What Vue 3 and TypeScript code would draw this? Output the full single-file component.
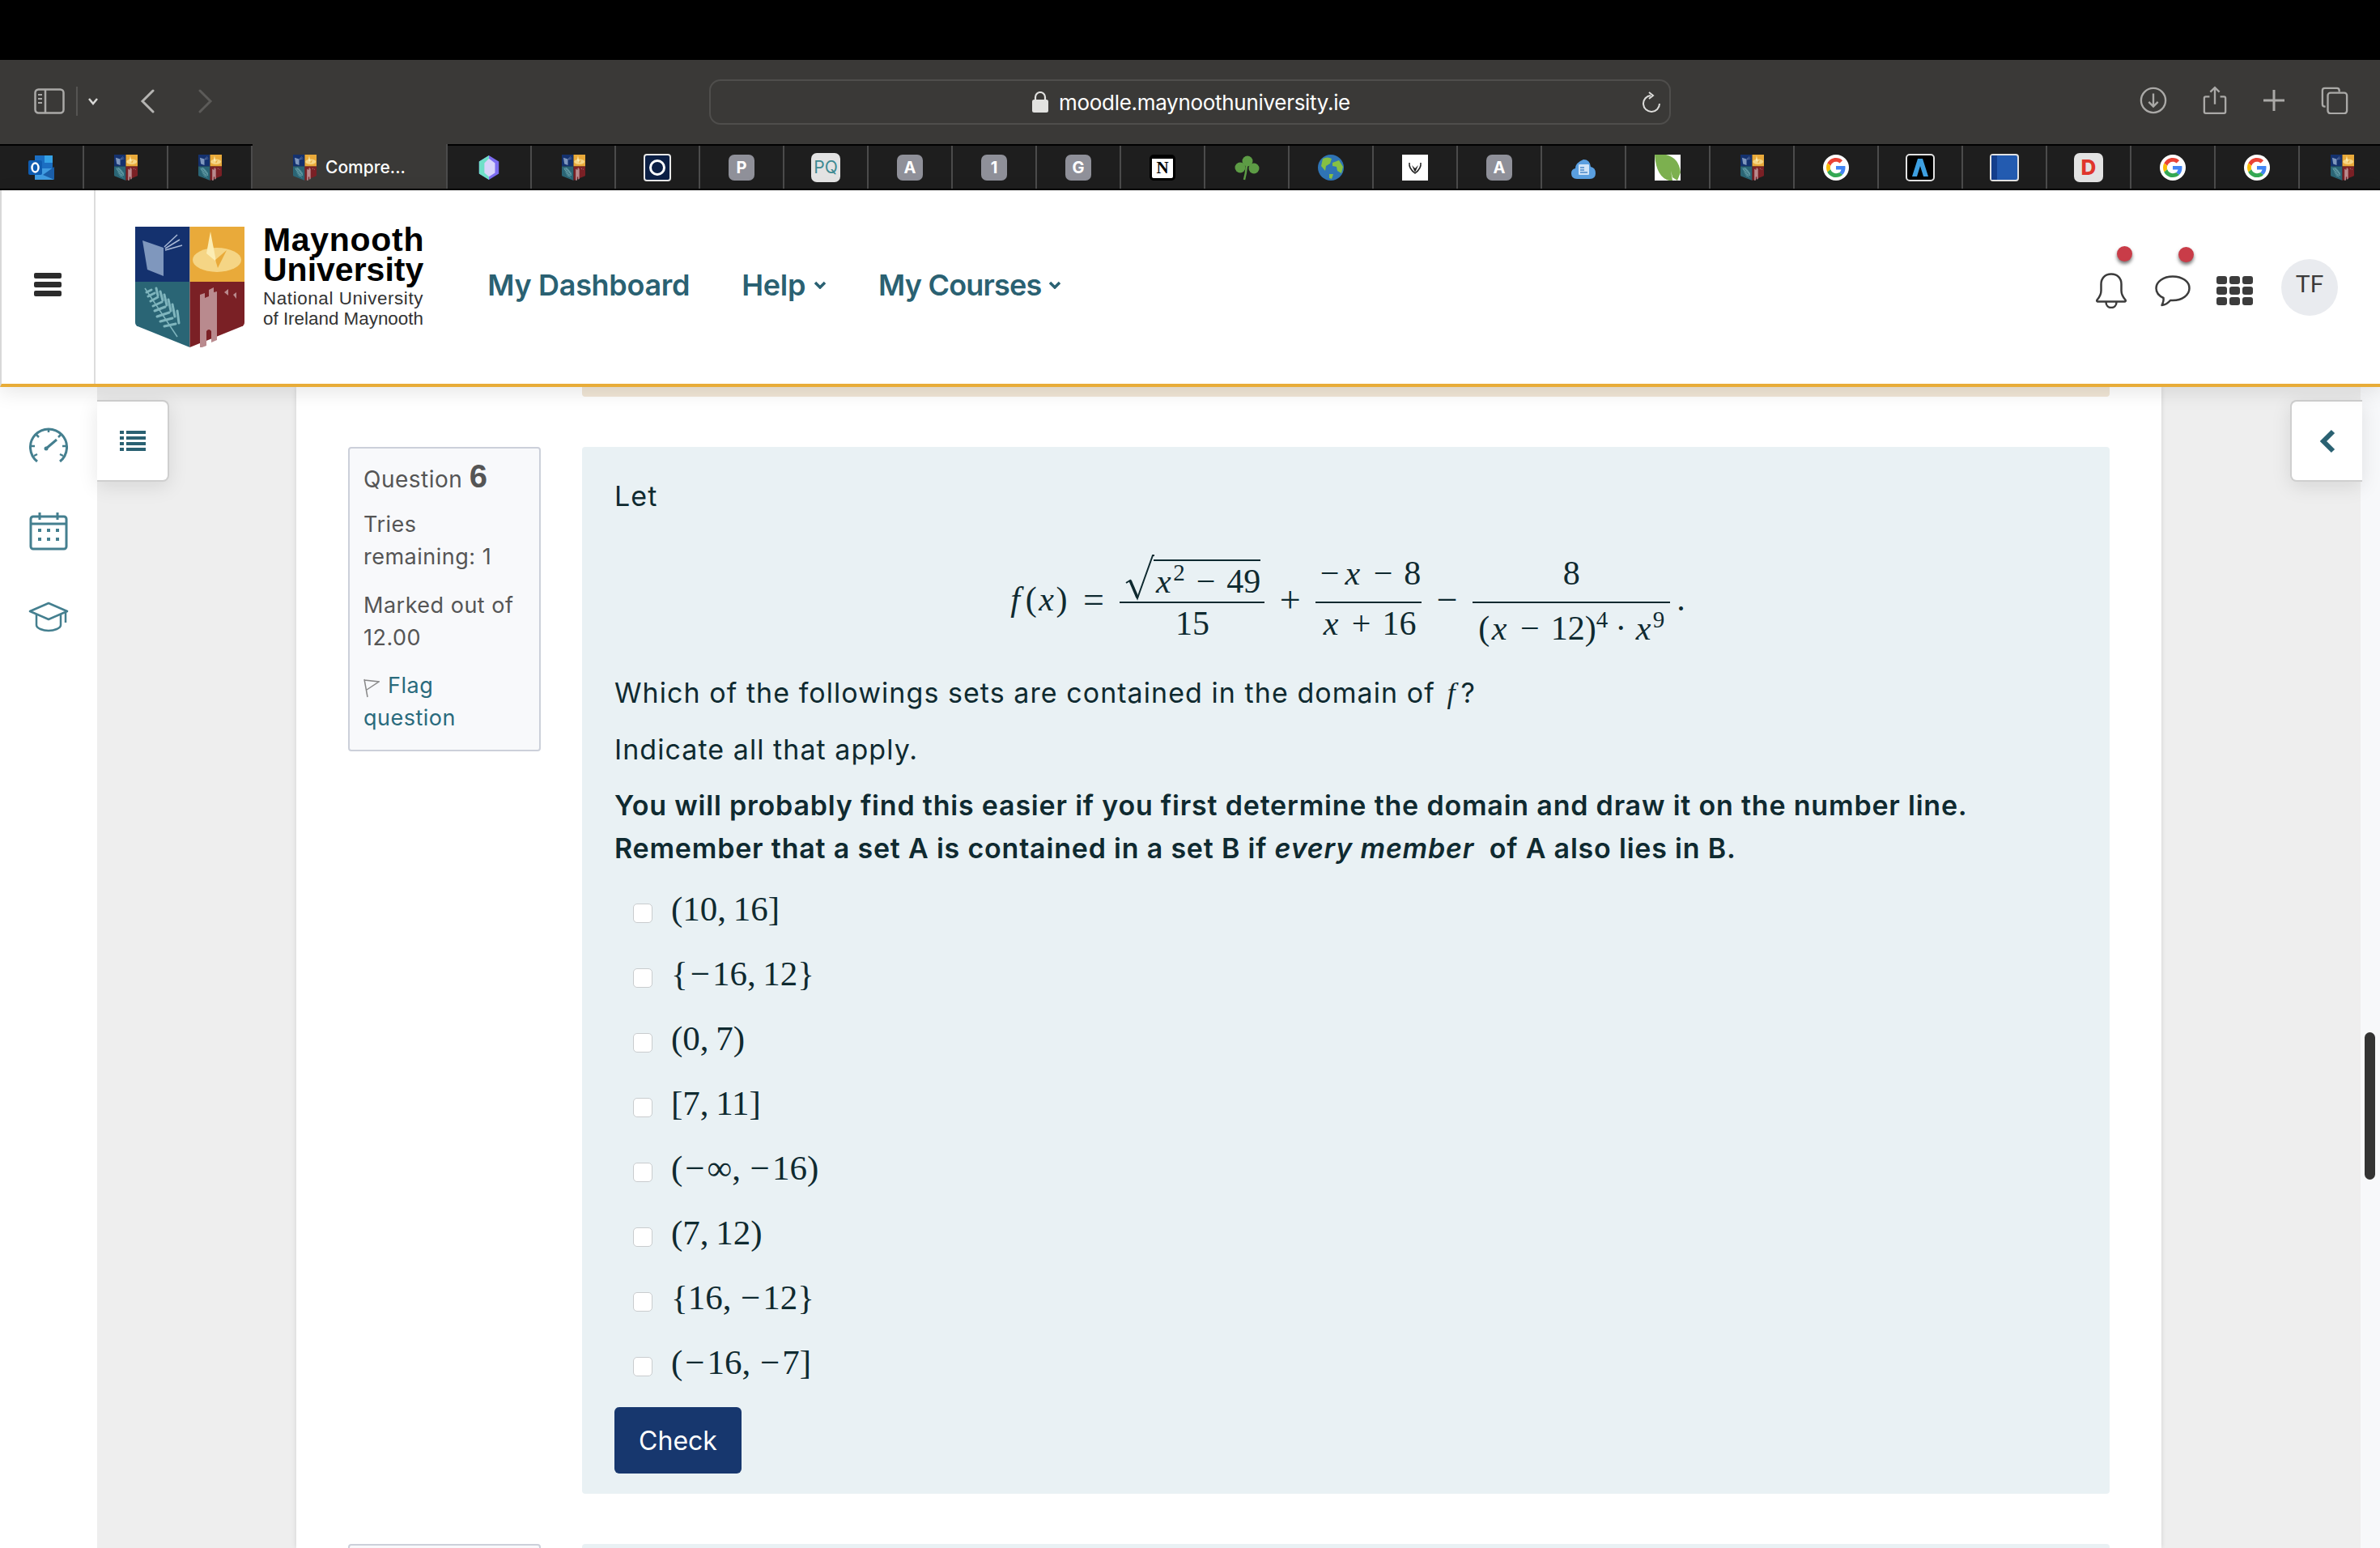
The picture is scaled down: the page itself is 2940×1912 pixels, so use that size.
<script setup lang="ts">
type Favicon = { kind: string; label?: string; name?: string };

const tabs: Favicon[] = [
  { kind: 'outlook' },
  { kind: 'shield' },
  { kind: 'shield' },
  { kind: 'shield', name: 'Compre...' },
  { kind: 'crystal' },
  { kind: 'shield' },
  { kind: 'ring' },
  { kind: 'letter', label: 'P' },
  { kind: 'pq', label: 'PQ' },
  { kind: 'letter', label: 'A' },
  { kind: 'letter', label: '1' },
  { kind: 'letter', label: 'G' },
  { kind: 'notion', label: 'N' },
  { kind: 'clover' },
  { kind: 'globe' },
  { kind: 'vee' },
  { kind: 'letter', label: 'A' },
  { kind: 'cloud' },
  { kind: 'leaf' },
  { kind: 'shield' },
  { kind: 'google' },
  { kind: 'lambda' },
  { kind: 'blue' },
  { kind: 'dee', label: 'D' },
  { kind: 'google' },
  { kind: 'google' },
  { kind: 'shield' },
];

// the minus signs get their own span, MathJax sets them wider than the text font does
const options = [
  '(10,\u200916]',
  '{−16,\u200912}',
  '(0,\u20097)',
  '[7,\u200911]',
  '(−∞,\u2009−16)',
  '(7,\u200912)',
  '{16,\u2009−12}',
  '(−16,\u2009−7]',
].map((text) => text.split('−'));
</script>

<template>
  <div class="page">
    <svg class="defs" aria-hidden="true">
      <symbol id="mu-shield" viewBox="0 0 135 149">
        <path d="M0 0H67.500V68H0z" fill="#14316e" />
        <path d="M67.500 0H135V68H67.500z" fill="#e9aa3a" />
        <path d="M0 68H67.500V149L3 123q-3-1.500-3-5z" fill="#2a6575" />
        <path d="M67.500 68H135V118q0 3.500-3 5L67.500 149z" fill="#7a2025" />
        <path d="M9 17l26 9 0 35-20-8z" fill="#7f97bd" />
        <path d="M36 25L52 10M37 27L55 16M37 29L58 23" stroke="#a9b9d6" stroke-width="1.500" />
        <ellipse cx="101" cy="41" rx="30" ry="15" fill="#f5d585" />
        <path d="M93 6l7 37-12-10z" fill="#fcedb4" />
        <path d="M113 29l-11 22-3-10z" fill="#e9aa3a" />
        <path d="M12 76L52 136" stroke="#7fb5bd" stroke-width="1.500" />
        <path d="M20 78l-6 3M24 82l-8 4M28 87l-9 5M33 93l-11 5M37 99l-13 5M42 106l-15 5M46 113l-15 4M50 120l-14 3M26 76l2 9M31 80l3 11M36 84l3 13M41 90l3 14M46 96l3 15M52 104l2 15" stroke="#7fb5bd" stroke-width="3" stroke-linecap="round" />
        <path d="M80 84l6-2v6l5-2v-8l6-3v6l4-1 0 60-7 3v-14q-3-4-6 0v18l-8 3z" fill="#b98a8e" />
        <path d="M110 81l5-4v8zM121 84l4-3v8z" fill="#b98a8e" />
      </symbol>
    </svg>

    <div class="topbar"></div>

    <div class="toolbar">
      <div class="toolbar-left">
        <svg class="sidebar-icon" width="38" height="32" viewBox="0 0 38 32" fill="none" stroke="#aaa9a7" stroke-width="2.500">
          <rect x="1.500" y="1.500" width="35" height="29" rx="4" />
          <path d="M14 2v28" />
          <path d="M5 8h5M5 13h5M5 18h5" stroke-width="2" />
        </svg>
        <span class="toolbar-sep"></span>
        <svg class="mini-chev" width="14" height="10" viewBox="0 0 14 10" fill="none" stroke="#d8d8d6" stroke-width="2.500">
          <path d="M2 2l5 6 5-6" />
        </svg>
        <svg class="back" width="18" height="30" viewBox="0 0 18 30" fill="none" stroke="#b5b4b2" stroke-width="3" stroke-linecap="round">
          <path d="M16 2L3 15l13 13" />
        </svg>
        <svg class="forward" width="18" height="30" viewBox="0 0 18 30" fill="none" stroke="#5c5b59" stroke-width="3" stroke-linecap="round">
          <path d="M2 2l13 13L2 28" />
        </svg>
      </div>
      <div class="urlbar">
        <svg class="lock" width="20" height="26" viewBox="0 0 20 26">
          <path d="M4 11V7a6 6 0 0 1 12 0v4" fill="none" stroke="#e2e2e0" stroke-width="2.200" />
          <rect y="10" width="20" height="16" rx="2.500" fill="#e2e2e0" />
        </svg>
        <span class="url">moodle.maynoothuniversity.ie</span>
        <svg class="reload" width="24" height="26" viewBox="0 0 24 26" fill="none" stroke="#dcdcda" stroke-width="2">
          <path d="M11 5a10 10 0 1 0 11 10" />
          <path d="M9 1l5 4-5 4" />
        </svg>
      </div>
      <div class="toolbar-right">
        <svg width="34" height="34" viewBox="0 0 36 36" fill="none" stroke="#aaa9a7" stroke-width="2.500">
          <circle cx="18" cy="18" r="16" />
          <path d="M18 9v17M12 20l6 6 6-6" />
        </svg>
        <svg width="30" height="36" viewBox="0 0 32 38" fill="none" stroke="#aaa9a7" stroke-width="2.500">
          <path d="M9 14H4q-2 0-2 2v18q0 2 2 2h24q2 0 2-2V16q0-2-2-2h-5" />
          <path d="M16 24V2M10 8l6-6 6 6" />
        </svg>
        <svg width="28" height="28" viewBox="0 0 28 28" fill="none" stroke="#aaa9a7" stroke-width="3">
          <path d="M14 1v26M1 14h26" />
        </svg>
        <svg width="34" height="34" viewBox="0 0 36 36" fill="none" stroke="#aaa9a7" stroke-width="2.500">
          <path d="M6 26H5q-3 0-3-3V5q0-3 3-3h16q3 0 3 3v2" />
          <rect x="9" y="8" width="25" height="27" rx="3.500" />
        </svg>
      </div>
    </div>

    <div class="tabs">
      <div v-for="(tab, i) in tabs" :key="i" class="tab" :class="{ active: tab.name }">
        <svg v-if="tab.kind === 'shield'" width="29" height="32" class="fav"><use href="#mu-shield" /></svg>
        <svg v-else-if="tab.kind === 'outlook'" width="32" height="30" viewBox="0 0 32 30" class="fav">
          <path d="M8 0h22v18H8z" fill="#1b6ec2" />
          <path d="M20 0h10v9H20z" fill="#35a2e6" />
          <path d="M8 16h24v12q0 2-2 2H8z" fill="#3f9be0" />
          <path d="M32 14L18 24l14 6z" fill="#1a5ea8" />
          <rect y="6" width="17" height="18" rx="2" fill="#0f5cb0" />
          <ellipse cx="8.500" cy="15" rx="4" ry="5.500" fill="none" stroke="#fff" stroke-width="2.500" />
        </svg>
        <svg v-else-if="tab.kind === 'crystal'" width="26" height="30" viewBox="0 0 26 32" class="fav">
          <path d="M13 0l13 8v16l-13 8L0 24V8z" fill="#7c6cf0" />
          <path d="M13 0L0 8v16l13 8z" fill="#6fe0c8" />
          <path d="M13 4l8 6v13l-8 5-6-5V10z" fill="#d8d4fa" />
        </svg>
        <svg v-else-if="tab.kind === 'ring'" width="34" height="34" viewBox="0 0 34 34" class="fav">
          <rect x="1" y="1" width="32" height="32" rx="3" fill="#0b1f45" stroke="#e8e8e8" stroke-width="2" />
          <circle cx="17" cy="17" r="8.500" fill="none" stroke="#fff" stroke-width="3" />
        </svg>
        <svg v-else-if="tab.kind === 'clover'" width="32" height="32" viewBox="0 0 32 32" class="fav">
          <circle cx="17" cy="8" r="6.500" fill="#5d9c45" />
          <circle cx="8" cy="16" r="6.500" fill="#5d9c45" />
          <circle cx="25" cy="17" r="6.500" fill="#5d9c45" />
          <path d="M16 14q-1 10-3 17" stroke="#5d9c45" stroke-width="2.500" fill="none" />
        </svg>
        <svg v-else-if="tab.kind === 'globe'" width="32" height="32" viewBox="0 0 32 32" class="fav">
          <circle cx="16" cy="16" r="16" fill="#2f74b5" />
          <path d="M6 5q6-3 11 0l-2 6-5 3-1 6-5-6zM18 10l8-3 5 8-2 8-5-3-1-5-5-1zM14 24l5 0-2 6-3-1z" fill="#86c043" />
        </svg>
        <svg v-else-if="tab.kind === 'vee'" width="32" height="32" viewBox="0 0 32 32" class="fav">
          <rect width="32" height="32" fill="#fff" />
          <path d="M9 10q-1 7 7 13 8-6 7-13" fill="none" stroke="#222" stroke-width="1.500" />
          <path d="M12 13l4 4 4-4-4 9z" fill="#222" />
        </svg>
        <svg v-else-if="tab.kind === 'cloud'" width="30" height="28" viewBox="0 0 30 28" class="fav">
          <path d="M7 28q-7 0-7-7 0-5 5-6 0-7 10-11 8 0 9 9 6 1 6 8 0 7-7 7z" fill="#5a9fe0" />
          <rect x="9" y="10" width="13" height="13" rx="1" fill="#cfe3f7" />
          <path d="M11 14h5M11 17h5M11 20h9" stroke="#4a88c8" stroke-width="1.300" />
        </svg>
        <svg v-else-if="tab.kind === 'leaf'" width="32" height="32" viewBox="0 0 32 32" class="fav">
          <rect width="32" height="32" fill="#fff" />
          <path d="M0 0h14q16 4 18 22l-4 10-6-4-2-8 2 12h-4Q2 28 0 0z" fill="#7cb04f" />
        </svg>
        <svg v-else-if="tab.kind === 'google'" width="32" height="32" viewBox="0 0 32 32" class="fav">
          <circle cx="16" cy="16" r="16" fill="#fff" />
          <g transform="translate(4 4) scale(.5)">
            <path fill="#EA4335" d="M24 9.500c3.540 0 6.710 1.220 9.210 3.600l6.850-6.850C35.900 2.380 30.470 0 24 0 14.620 0 6.510 5.380 2.560 13.220l7.980 6.190C12.430 13.720 17.740 9.500 24 9.500z" />
            <path fill="#4285F4" d="M46.980 24.550c0-1.570-.15-3.090-.38-4.550H24v9.020h12.940c-.58 2.960-2.260 5.480-4.780 7.180l7.730 6c4.510-4.180 7.090-10.360 7.090-17.650z" />
            <path fill="#FBBC05" d="M10.530 28.590c-.48-1.450-.76-2.990-.76-4.590s.27-3.140.76-4.590l-7.980-6.190C.92 16.460 0 20.120 0 24c0 3.880.92 7.540 2.560 10.780l7.970-6.190z" />
            <path fill="#34A853" d="M24 48c6.480 0 11.930-2.130 16.080-5.810l-7.730-6c-2.150 1.450-4.920 2.300-8.350 2.300-6.260 0-11.570-4.220-13.470-9.910l-7.980 6.190C6.510 42.620 14.620 48 24 48z" />
          </g>
        </svg>
        <svg v-else-if="tab.kind === 'lambda'" width="36" height="34" viewBox="0 0 36 34" class="fav">
          <rect x="1" y="1" width="34" height="32" rx="4" fill="#000" stroke="#e2e2e2" stroke-width="2" />
          <path d="M15 6h6l7 22h-6l-4-13-4 13H8z" fill="#3d9fe0" />
        </svg>
        <svg v-else-if="tab.kind === 'blue'" width="36" height="34" viewBox="0 0 36 34" class="fav">
          <rect x="1" y="1" width="34" height="32" rx="3" fill="#235bb0" stroke="#e2e2e2" stroke-width="2" />
          <rect x="2" y="2" width="7" height="30" fill="#143f8c" />
        </svg>
        <span v-else :class="['glyph', tab.kind]">{{ tab.label }}</span>
        <span v-if="tab.name" class="tab-name">{{ tab.name }}</span>
      </div>
    </div>

    <header class="header">
      <div class="menu-cell">
        <span class="menu-bar"></span>
        <span class="menu-bar"></span>
        <span class="menu-bar"></span>
      </div>
      <div class="brand">
        <svg width="135" height="149" class="brand-shield"><use href="#mu-shield" /></svg>
        <div class="brand-text">
          <div class="brand-name"><span class="wide-name">Maynooth</span><br />University</div>
          <div class="brand-sub"><span class="wide-sub">National University</span><br />of Ireland Maynooth</div>
        </div>
      </div>
      <nav class="nav">
        <a class="nav-link">My Dashboard</a>
        <a class="nav-link">Help
          <svg width="16" height="10" viewBox="0 0 16 10" fill="none" stroke="#2a6172" stroke-width="3.500"><path d="M2 2l6 6 6-6" /></svg>
        </a>
        <a class="nav-link courses">My Courses
          <svg width="16" height="10" viewBox="0 0 16 10" fill="none" stroke="#2a6172" stroke-width="3.500"><path d="M2 2l6 6 6-6" /></svg>
        </a>
      </nav>
      <div class="user">
        <div class="user-icon bell">
          <svg width="38" height="44" viewBox="0 0 38 44" fill="none" stroke="#3c3c3c" stroke-width="2.500" stroke-linejoin="round">
            <path d="M19 1.500C11 1.500 6.500 7 6.500 14v8c0 5-2 8-5 11.500-.8 1 0 2 1 2h33c1 0 1.800-1 1-2-3-3.500-5-6.500-5-11.500v-8C31.500 7 27 1.500 19 1.500z" />
            <path d="M12.500 36c0 4.500 3 7 6.500 7s6.500-2.500 6.500-7" />
          </svg>
          <span class="dot"></span>
        </div>
        <div class="user-icon chat">
          <svg width="44" height="39" viewBox="0 0 44 39" fill="none" stroke="#3c3c3c" stroke-width="2.500" stroke-linejoin="round">
            <path d="M22 1.500C10.500 1.500 1.500 8 1.500 16c0 5 3.500 9.500 9 12 .5 3-.5 6-2 9 5-.5 8-3 10.500-6 1 .1 2 .1 3 .1 11.500 0 20.500-6.600 20.500-15.100S33.500 1.500 22 1.500z" />
          </svg>
          <span class="dot"></span>
        </div>
        <div class="apps">
          <span v-for="n in 9" :key="n" class="apps-cell"></span>
        </div>
        <div class="avatar">TF</div>
      </div>
    </header>

    <div class="body">
      <aside class="rail">
        <svg width="48" height="44" viewBox="0 0 48 44" fill="none" stroke="#447f8f" stroke-width="3">
          <path d="M10 43A22.500 22.500 0 1 1 38 43" />
          <path d="M24 2v5M8 9l4 4M40 9l-4 4M2 24h5M46 24h-5M6 36l4-2M42 36l-4-2" stroke-width="2.500" />
          <path d="M21 27l13-11" stroke-width="3" />
          <circle cx="21" cy="27" r="2.500" fill="#447f8f" stroke="none" />
        </svg>
        <svg width="48" height="48" viewBox="0 0 48 48" fill="none" stroke="#447f8f" stroke-width="3">
          <rect x="2" y="6" width="44" height="40" rx="3" />
          <path d="M2 15h44M13 1v9M35 1v9" />
          <path d="M11 23h4M22 23h4M33 23h4M11 34h4M22 34h4M33 34h4" stroke-width="4" />
        </svg>
        <svg class="rail-cap" width="50" height="38" viewBox="0 0 50 38" fill="none" stroke="#447f8f" stroke-width="2.500" stroke-linejoin="round">
          <path d="M25 2l23 10-23 10L2 12z" />
          <path d="M10 16v13c0 4 8 7 15 7s15-3 15-7V16" />
          <path d="M46 13v13" />
        </svg>
      </aside>

      <div class="gutter">
        <div class="drawer-toggle left">
          <svg width="32" height="25" viewBox="0 0 32 25" fill="#2a6172">
            <path d="M0 0h5v4H0zM8 0h24v4H8zM0 7h5v4H0zM8 7h24v4H8zM0 14h5v4H0zM8 14h24v4H8zM0 21h5v4H0zM8 21h24v4H8z" />
          </svg>
        </div>
      </div>

      <main class="content">
        <div class="prev-strip"></div>

        <section class="question">
          <div class="info">
            <h3 class="qno">Question <span class="qno-num">6</span></h3>
            <p class="info-line first">Tries remaining: 1</p>
            <p class="info-line">Marked out of 12.00</p>
            <p class="info-line flag">
              <svg width="20" height="24" viewBox="0 0 20 24" fill="none" stroke="#888" stroke-width="1.500">
                <path d="M1 1l4 22M1 2l18 2L4 14" />
              </svg>
              Flag question
            </p>
          </div>
          <div class="formulation">
            <p class="para let">Let</p>
            <div class="display">
              <span class="math">
                <span class="lead"><i class="f">f</i>(<i>x</i>)</span>
                <span class="op eq">=</span>
                <span class="frac">
                  <span class="num root">
                    <svg class="surd" width="36" height="58" viewBox="0 0 36 58" fill="none" stroke="#0f2a30">
                      <path d="M1 35l5-3 9 22L34 1h2" stroke-width="2" />
                      <path d="M6 32l9 21" stroke-width="3.500" />
                    </svg>
                    <span class="radicand"><i>x</i><sup>2</sup><span class="op-in">−</span>49</span>
                  </span>
                  <span class="den">15</span>
                </span>
                <span class="op">+</span>
                <span class="frac">
                  <span class="num"><span class="neg">−</span><i>x</i><span class="op-in">−</span>8</span>
                  <span class="den"><i>x</i><span class="op-in">+</span>16</span>
                </span>
                <span class="op">−</span>
                <span class="frac">
                  <span class="num">8</span>
                  <span class="den low">(<i>x</i><span class="op-in">−</span>12)<sup>4</sup><span class="op-in dot-op">·</span><i>x</i><sup>9</sup></span>
                </span>
                <span class="stop">.</span>
              </span>
            </div>
            <p class="para which">Which of the followings sets are contained in the domain of <i class="inline-f">f</i>?</p>
            <p class="para indicate">Indicate all that apply.</p>
            <p class="hint">You will probably find this easier if you first determine the domain and draw it on the number line.<br />Remember that a set A is contained in a set B if <em>every member</em>&nbsp; of A also lies in B.</p>
            <div class="answers">
              <label v-for="(parts, i) in options" :key="i" class="answer">
                <span class="check"></span>
                <span class="answer-text"><template v-for="(part, j) in parts" :key="j"><span v-if="j > 0" class="neg opt">−</span>{{ part }}</template></span>
              </label>
            </div>
            <button class="check-btn">Check</button>
          </div>
        </section>

        <section class="question next">
          <div class="info"></div>
          <div class="formulation"></div>
        </section>
      </main>

      <div class="gutter right">
        <div class="drawer-toggle right">
          <svg width="20" height="30" viewBox="0 0 20 30" fill="none" stroke="#2a6172" stroke-width="6">
            <path d="M17 3L5 15l12 12" />
          </svg>
        </div>
      </div>
      <div class="right-edge"></div>

      <div class="scrollbar"></div>
    </div>
  </div>
</template>

<style>
html,
body {
  margin: 0;
  background: #fff;
}
</style>

<style scoped>
.page {
  width: 2940px;
  height: 1912px;
  overflow: hidden;
  display: flex;
  flex-direction: column;
  font-family: Inter, "Liberation Sans", sans-serif;
  color: #0f2a30;
}

.defs {
  position: absolute;
  width: 0;
  height: 0;
}

.topbar {
  height: 74px;
  background: #000;
}

.toolbar {
  height: 104px;
  background: #3a3937;
  display: grid;
  grid-template-columns: 876px 1188px 1fr;
  align-items: center;
}

.toolbar-left {
  display: flex;
  align-items: center;
  padding-left: 42px;
  height: 36px;
  margin-top: -3px;
}

.toolbar-sep {
  width: 2px;
  height: 36px;
  background: #555452;
  margin-left: 14px;
}

.mini-chev {
  margin-left: 12px;
}

.back {
  margin-left: 51px;
}

.forward {
  margin-left: 54px;
}

.urlbar {
  height: 56px;
  box-sizing: border-box;
  border: 2px solid #4f4e4c;
  border-radius: 14px;
  display: flex;
  align-items: center;
  position: relative;
  padding-left: 397px;
}

.lock {
  margin-right: 13px;
}

.url {
  color: #fff;
  font-size: 26px;
  letter-spacing: -0.3px;
}

.reload {
  margin-left: auto;
  margin-right: 10px;
}

.toolbar-right {
  display: flex;
  align-items: center;
  padding-left: 579px;
  gap: 44px;
  margin-top: -4px;
}

.tabs {
  height: 57px;
  display: flex;
  background: #1e1e1e;
  box-sizing: border-box;
  border-top: 2px solid #000;
  border-bottom: 2px solid #000;
}

.tab {
  width: 104px;
  flex: none;
  display: flex;
  align-items: center;
  justify-content: center;
  box-sizing: border-box;
  border-right: 2px solid #4b4b4b;
}

.tab.active {
  width: 241px;
  background: #3a3937;
  margin-top: -2px;
  gap: 11px;
  justify-content: flex-start;
  padding-left: 50px;
  padding-top: 2px;
}

.tab:last-child {
  border-right: none;
}

.fav {
  display: block;
}

.glyph {
  display: flex;
  align-items: center;
  justify-content: center;
  width: 32px;
  height: 32px;
  border-radius: 7px;
  font-size: 20px;
  font-weight: 700;
  color: #fff;
}

.glyph.letter {
  background: #8f9099;
}

.glyph.pq {
  width: 36px;
  height: 36px;
  background: #e3e3e3;
  color: #3d8a92;
  font-size: 21px;
  font-weight: 400;
}

.glyph.dee {
  width: 36px;
  height: 36px;
  background: #e3e3e3;
  color: #e0362c;
  font-size: 26px;
  font-weight: 800;
}

.glyph.notion {
  box-sizing: border-box;
  width: 32px;
  height: 32px;
  background: #fff;
  border: 3px solid #000;
  border-top-width: 5px;
  border-radius: 5px;
  color: #000;
  font-family: "Liberation Serif", serif;
  font-size: 21px;
}

.tab-name {
  color: #fff;
  font-size: 21px;
  font-weight: 500;
}

.header {
  height: 243px;
  flex: none;
  box-sizing: border-box;
  background: #fff;
  border-bottom: 4px solid #e8ac38;
  border-left: 2px solid #d8d8d8;
  display: flex;
  align-items: center;
  position: relative;
  z-index: 2;
  box-shadow: 0 6px 24px rgba(0, 0, 0, 0.1);
}

.menu-cell {
  width: 116px;
  height: 100%;
  box-sizing: border-box;
  border-right: 2px solid #dcdcdc;
  display: flex;
  flex-direction: column;
  align-items: center;
  justify-content: center;
  gap: 4px;
  padding-bottom: 6px;
  flex: none;
}

.menu-bar {
  width: 34px;
  height: 7px;
  border-radius: 2px;
  background: #2c2c2c;
}

.brand {
  display: flex;
  align-items: flex-start;
  gap: 23px;
  margin-left: 49px;
}

.brand-shield {
  display: block;
  flex: none;
}

.brand-text {
  font-family: "Liberation Sans", Arial, sans-serif;
  color: #000;
}

.brand-name {
  font-size: 41px;
  font-weight: 700;
  line-height: 37px;
  margin-top: -2px;
}

.wide-name {
  letter-spacing: 0.7px;
}

.brand-sub {
  font-size: 22.400px;
  line-height: 24.500px;
  color: #333;
  margin-top: 5px;
}

.wide-sub {
  letter-spacing: 0.6px;
}

.nav {
  display: flex;
  align-items: center;
  gap: 64px;
  margin-left: 78px;
  margin-bottom: 6px;
}

.nav-link {
  color: #2a6172;
  font-size: 36px;
  font-weight: 600;
  display: flex;
  align-items: center;
  gap: 10px;
  letter-spacing: -0.3px;
}

.nav-link.courses {
  letter-spacing: -0.8px;
  gap: 9px;
}

.user {
  margin-left: auto;
  margin-right: 52px;
  display: flex;
  align-items: center;
}

.user-icon {
  position: relative;
  margin-top: 9px;
  display: flex;
}

.chat {
  margin-left: 35px;
}

.dot {
  position: absolute;
  top: -33px;
  left: 26px;
  width: 19px;
  height: 19px;
  border-radius: 50%;
  background: #c93c48;
  box-shadow: 0 3px 4px rgba(0, 0, 0, 0.55);
}

.chat .dot {
  left: 29px;
  top: -35px;
}

.apps {
  margin-left: 32px;
  margin-top: 9px;
  display: grid;
  grid-template-columns: repeat(3, 13px);
  grid-auto-rows: 10px;
  gap: 3px;
}

.apps-cell {
  background: #3c3c3c;
  border-radius: 3px;
}

.avatar {
  width: 70px;
  height: 70px;
  margin-left: 35px;
  border-radius: 50%;
  background: #e9ebef;
  color: #3a3a3a;
  font-family: Roboto, sans-serif;
  font-size: 30px;
  display: flex;
  align-items: center;
  justify-content: center;
  padding-bottom: 8px;
  box-sizing: border-box;
}

.body {
  flex: 1;
  display: flex;
  position: relative;
  background: #eeeeee;
  min-height: 0;
}

.rail {
  width: 120px;
  flex: none;
  background: #fff;
  display: flex;
  flex-direction: column;
  align-items: center;
  padding-top: 49px;
  gap: 61px;
  box-sizing: border-box;
}

.rail-cap {
  margin-top: 2px;
}

.gutter {
  width: 246px;
  flex: none;
  padding-top: 16px;
  box-sizing: border-box;
}

.drawer-toggle {
  width: 89px;
  height: 101px;
  box-sizing: border-box;
  background: #fff;
  display: flex;
  align-items: center;
  justify-content: center;
  border: 2px solid #cfcfcf;
  box-shadow: 0 6px 24px rgba(0, 0, 0, 0.1);
  position: relative;
  z-index: 1;
}

.drawer-toggle.left {
  border-left: none;
  border-radius: 0 8px 8px 0;
}

.drawer-toggle.right {
  border-right: none;
  border-radius: 8px 0 0 8px;
  margin-left: 159px;
}

.content {
  width: 2304px;
  flex: none;
  background: #fff;
  box-sizing: border-box;
  padding: 0 64px;
  box-shadow: 0 0 6px rgba(0, 0, 0, 0.12);
}

.prev-strip {
  height: 12px;
  margin-left: 289px;
  background: #f1e6d6;
  border-radius: 0 0 4px 4px;
}

.question {
  display: flex;
  align-items: flex-start;
  gap: 51px;
  margin-top: 62px;
}

.info {
  width: 238px;
  flex: none;
  box-sizing: border-box;
  background: #f8f9fb;
  border: 2px solid #ccd0da;
  border-radius: 4px;
  padding: 11px 17px 19px;
  color: #555;
  font-size: 27px;
  line-height: 40px;
  letter-spacing: 0.5px;
}

.qno {
  margin: 0;
  font-size: 28px;
  font-weight: 400;
  line-height: 46px;
}

.qno-num {
  font-family: "Liberation Sans", sans-serif;
  font-size: 40px;
  font-weight: 700;
}

.info-line {
  margin: 20px 0 0;
}

.info-line.first {
  margin-top: 13px;
}

.flag {
  color: #2a6b7d;
  margin-top: 19px;
}

.flag svg {
  vertical-align: -6px;
  margin-right: 2px;
}

.formulation {
  flex: 1;
  box-sizing: border-box;
  background: #e9f1f4;
  border-radius: 4px;
  padding: 38px 41px 24px 40px;
  min-height: 1293px;
}

.para {
  margin: 0;
  font-size: 34px;
  line-height: 46px;
  letter-spacing: 1.050px;
}

.display {
  text-align: center;
  margin-top: 47px;
  height: 124px;
  font-family: "Liberation Serif", serif;
  font-size: 42px;
}

.math {
  display: inline-flex;
  align-items: center;
  white-space: pre;
  height: 124px;
}

.lead {
  margin-bottom: 10px;
}

.math i {
  padding-left: 2.500px;
  padding-right: 2.500px;
}

.math i.f {
  padding: 0 7px 0 6px;
}

.frac {
  display: inline-flex;
  flex-direction: column;
  align-items: center;
}

.num {
  display: flex;
  align-items: flex-end;
  justify-content: center;
  box-sizing: border-box;
  height: 61px;
  line-height: 50px;
  padding: 0 1px 10px;
  border-bottom: 2px solid #0f2a30;
  align-self: stretch;
}

.num.root {
  padding: 0 5px 0 7px;
}

.den {
  height: 61px;
  line-height: 50px;
  padding: 0 5px;
}

.den.low {
  padding: 6px 7px 0;
  box-sizing: border-box;
}

.surd {
  margin-right: -1px;
  flex: none;
}

.radicand {
  border-top: 2px solid #0f2a30;
  line-height: 50px;
}

sup {
  font-size: 29px;
  line-height: 0;
}

.op {
  width: 63px;
  text-align: center;
  font-size: 46px;
  margin-bottom: 10px;
}

.eq {
  width: 65px;
}

.op-in {
  padding: 0 14px;
}

.neg {
  padding: 0 4.500px;
}

.neg.opt {
  padding: 0 3px;
}

.dot-op {
  padding: 0 9px;
}

.stop {
  margin-left: 8px;
  margin-bottom: 10px;
}

.inline-f {
  font-family: "Liberation Serif", serif;
  font-size: 36px;
  padding: 0 6px 0 4px;
}

.which {
  margin-top: 26px;
}

.indicate {
  margin-top: 24px;
}

.hint {
  margin: 20px 0 0;
  font-size: 34px;
  font-weight: 600;
  line-height: 52.500px;
  letter-spacing: 0.800px;
}

.answers {
  margin-top: 8px;
}

.answer {
  display: flex;
  align-items: center;
  height: 80px;
  padding-left: 23px;
}

.check {
  width: 24px;
  height: 24px;
  box-sizing: border-box;
  background: #fff;
  border: 1.500px solid #c9ccce;
  border-radius: 5px;
  margin-top: 12px;
  flex: none;
}

.answer-text {
  font-family: "Liberation Serif", serif;
  font-size: 43px;
  margin-left: 23px;
}

.check-btn {
  display: block;
  width: 157px;
  height: 82px;
  margin-top: 16px;
  border: none;
  border-radius: 6px;
  background: #17376e;
  color: #fff;
  font-family: Inter, sans-serif;
  font-size: 32px;
}

.next .formulation {
  min-height: 300px;
}

.next .info {
  height: 300px;
}

.right-edge {
  flex: 1;
  background: #f7f8fa;
  position: relative;
}

.scrollbar {
  position: absolute;
  left: 2921px;
  top: 797px;
  width: 13px;
  height: 182px;
  border-radius: 7px;
  background: #333;
}
</style>
